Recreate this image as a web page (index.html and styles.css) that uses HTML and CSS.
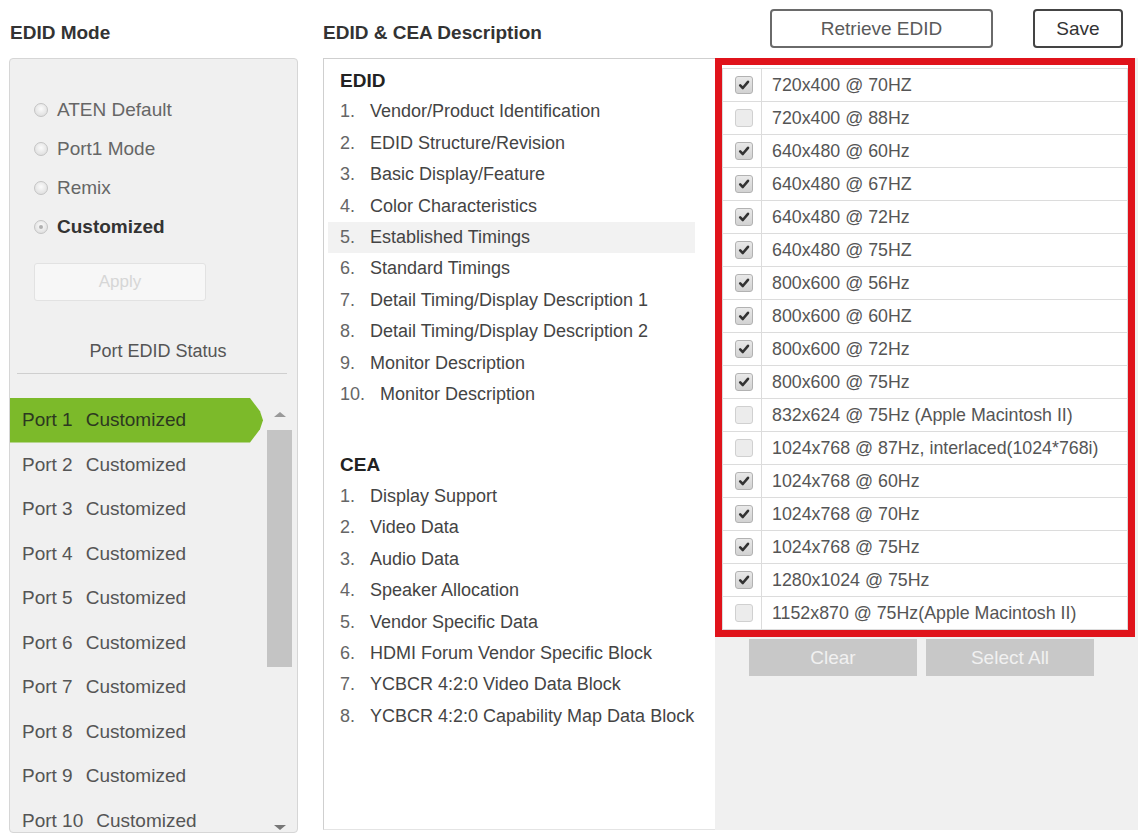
FILE: index.html
```html
<!DOCTYPE html>
<html lang="en">
<head>
<meta charset="utf-8">
<title>EDID Settings</title>
<link rel="stylesheet" href="styles.css">
</head>
<body>
<div class="page">
  <section class="col col-left">
    <div class="col-head"><h2 class="title">EDID Mode</h2></div>
    <div class="mode-panel">
      <div class="radios">
        <div class="radio-row"><span class="radio"></span>ATEN Default</div>
        <div class="radio-row"><span class="radio"></span>Port1 Mode</div>
        <div class="radio-row"><span class="radio"></span>Remix</div>
        <div class="radio-row selected"><span class="radio on"></span>Customized</div>
      </div>
      <button class="apply" type="button">Apply</button>
      <div class="status-title">Port EDID Status</div>
      <div class="port-area">
        <ul class="port-list">
          <li class="port active"><span class="port-name">Port 1</span><span>Customized</span></li>
          <li class="port"><span class="port-name">Port 2</span><span>Customized</span></li>
          <li class="port"><span class="port-name">Port 3</span><span>Customized</span></li>
          <li class="port"><span class="port-name">Port 4</span><span>Customized</span></li>
          <li class="port"><span class="port-name">Port 5</span><span>Customized</span></li>
          <li class="port"><span class="port-name">Port 6</span><span>Customized</span></li>
          <li class="port"><span class="port-name">Port 7</span><span>Customized</span></li>
          <li class="port"><span class="port-name">Port 8</span><span>Customized</span></li>
          <li class="port"><span class="port-name">Port 9</span><span>Customized</span></li>
          <li class="port"><span class="port-name">Port 10</span><span>Customized</span></li>
        </ul>
        <div class="scrollbar">
          <span class="arrow up"></span>
          <span class="thumb"></span>
          <span class="arrow down"></span>
        </div>
      </div>
    </div>
  </section>

  <section class="col col-mid">
    <div class="col-head"><h2 class="title">EDID &amp; CEA Description</h2></div>
    <div class="desc-panel">
      <div class="desc-head">EDID</div>
      <ul class="desc-list">
        <li><span class="num">1.</span>Vendor/Product Identification</li>
        <li><span class="num">2.</span>EDID Structure/Revision</li>
        <li><span class="num">3.</span>Basic Display/Feature</li>
        <li><span class="num">4.</span>Color Characteristics</li>
        <li class="current"><span class="num">5.</span>Established Timings</li>
        <li><span class="num">6.</span>Standard Timings</li>
        <li><span class="num">7.</span>Detail Timing/Display Description 1</li>
        <li><span class="num">8.</span>Detail Timing/Display Description 2</li>
        <li><span class="num">9.</span>Monitor Description</li>
        <li><span class="num wide">10.</span>Monitor Description</li>
      </ul>
      <div class="desc-head cea">CEA</div>
      <ul class="desc-list">
        <li><span class="num">1.</span>Display Support</li>
        <li><span class="num">2.</span>Video Data</li>
        <li><span class="num">3.</span>Audio Data</li>
        <li><span class="num">4.</span>Speaker Allocation</li>
        <li><span class="num">5.</span>Vendor Specific Data</li>
        <li><span class="num">6.</span>HDMI Forum Vendor Specific Block</li>
        <li><span class="num">7.</span>YCBCR 4:2:0 Video Data Block</li>
        <li><span class="num">8.</span>YCBCR 4:2:0 Capability Map Data Block</li>
      </ul>
    </div>
  </section>

  <section class="col col-right">
    <div class="col-head right-head">
      <button class="btn-outline retrieve" type="button">Retrieve EDID</button>
      <button class="btn-outline save" type="button">Save</button>
    </div>
    <div class="timing-panel">
      <div class="timings">
        <ul class="timing-list">
          <li><span class="cb-cell"><span class="cb on"><svg viewBox="0 0 12 12" width="12" height="12"><path d="M2.2 6.4 L4.8 9 L10 2.8" /></svg></span></span><span class="t-text">720x400 @ 70HZ</span></li>
          <li><span class="cb-cell"><span class="cb"></span></span><span class="t-text">720x400 @ 88Hz</span></li>
          <li><span class="cb-cell"><span class="cb on"><svg viewBox="0 0 12 12" width="12" height="12"><path d="M2.2 6.4 L4.8 9 L10 2.8" /></svg></span></span><span class="t-text">640x480 @ 60Hz</span></li>
          <li><span class="cb-cell"><span class="cb on"><svg viewBox="0 0 12 12" width="12" height="12"><path d="M2.2 6.4 L4.8 9 L10 2.8" /></svg></span></span><span class="t-text">640x480 @ 67HZ</span></li>
          <li><span class="cb-cell"><span class="cb on"><svg viewBox="0 0 12 12" width="12" height="12"><path d="M2.2 6.4 L4.8 9 L10 2.8" /></svg></span></span><span class="t-text">640x480 @ 72Hz</span></li>
          <li><span class="cb-cell"><span class="cb on"><svg viewBox="0 0 12 12" width="12" height="12"><path d="M2.2 6.4 L4.8 9 L10 2.8" /></svg></span></span><span class="t-text">640x480 @ 75HZ</span></li>
          <li><span class="cb-cell"><span class="cb on"><svg viewBox="0 0 12 12" width="12" height="12"><path d="M2.2 6.4 L4.8 9 L10 2.8" /></svg></span></span><span class="t-text">800x600 @ 56Hz</span></li>
          <li><span class="cb-cell"><span class="cb on"><svg viewBox="0 0 12 12" width="12" height="12"><path d="M2.2 6.4 L4.8 9 L10 2.8" /></svg></span></span><span class="t-text">800x600 @ 60HZ</span></li>
          <li><span class="cb-cell"><span class="cb on"><svg viewBox="0 0 12 12" width="12" height="12"><path d="M2.2 6.4 L4.8 9 L10 2.8" /></svg></span></span><span class="t-text">800x600 @ 72Hz</span></li>
          <li><span class="cb-cell"><span class="cb on"><svg viewBox="0 0 12 12" width="12" height="12"><path d="M2.2 6.4 L4.8 9 L10 2.8" /></svg></span></span><span class="t-text">800x600 @ 75Hz</span></li>
          <li><span class="cb-cell"><span class="cb"></span></span><span class="t-text">832x624 @ 75Hz (Apple Macintosh II)</span></li>
          <li><span class="cb-cell"><span class="cb"></span></span><span class="t-text">1024x768 @ 87Hz, interlaced(1024*768i)</span></li>
          <li><span class="cb-cell"><span class="cb on"><svg viewBox="0 0 12 12" width="12" height="12"><path d="M2.2 6.4 L4.8 9 L10 2.8" /></svg></span></span><span class="t-text">1024x768 @ 60Hz</span></li>
          <li><span class="cb-cell"><span class="cb on"><svg viewBox="0 0 12 12" width="12" height="12"><path d="M2.2 6.4 L4.8 9 L10 2.8" /></svg></span></span><span class="t-text">1024x768 @ 70Hz</span></li>
          <li><span class="cb-cell"><span class="cb on"><svg viewBox="0 0 12 12" width="12" height="12"><path d="M2.2 6.4 L4.8 9 L10 2.8" /></svg></span></span><span class="t-text">1024x768 @ 75Hz</span></li>
          <li><span class="cb-cell"><span class="cb on"><svg viewBox="0 0 12 12" width="12" height="12"><path d="M2.2 6.4 L4.8 9 L10 2.8" /></svg></span></span><span class="t-text">1280x1024 @ 75Hz</span></li>
          <li><span class="cb-cell"><span class="cb"></span></span><span class="t-text">1152x870 @ 75Hz(Apple Macintosh II)</span></li>
        </ul>
      </div>
      <div class="actions">
        <button class="btn-grey" type="button">Clear</button>
        <button class="btn-grey" type="button">Select All</button>
      </div>
    </div>
  </section>
</div>
</body>
</html>
```

FILE: styles.css
```css
html, body {
  margin: 0;
  padding: 0;
  overflow: hidden;
  background: #ffffff;
}

body {
  font-family: "Liberation Sans", Arial, sans-serif;
  color: #444;
}

.page {
  display: flex;
  width: 1140px;
  height: 835px;
  padding-left: 9px;
  box-sizing: border-box;
}

.col-left { width: 289px; }
.col-mid { width: 392px; margin-left: 25px; }
.col-right { width: 423px; }

.col-head {
  height: 58px;
  padding-top: 8px;
  box-sizing: border-box;
  display: flex;
  align-items: center;
}

.title {
  margin: 0;
  font-size: 19px;
  font-weight: bold;
  color: #333;
}

.col-left .title { padding-left: 1px; }

/* ---------- left: mode panel ---------- */
.mode-panel {
  height: 775px;
  box-sizing: border-box;
  background: #f0f0f0;
  border: 1px solid #d6d6d6;
  border-radius: 4px;
  padding-top: 31px;
  overflow: hidden;
}

.radios { padding-left: 24px; }

.radio-row {
  display: flex;
  align-items: center;
  height: 39px;
  font-size: 19px;
  color: #666;
}

.radio-row.selected {
  font-weight: bold;
  color: #333;
}

.radio {
  position: relative;
  width: 14px;
  height: 14px;
  box-sizing: border-box;
  border-radius: 50%;
  border: 1px solid #c4c4c4;
  background: radial-gradient(circle at 50% 40%, #fbfbfb, #d8d8d8);
  margin-right: 9px;
  flex: none;
}

.radio.on::after {
  content: "";
  position: absolute;
  left: 4px;
  top: 4px;
  width: 4px;
  height: 4px;
  border-radius: 50%;
  background: #b0b0b0;
}

.apply {
  display: block;
  margin: 17px 0 0 24px;
  width: 172px;
  height: 38px;
  background: #f7f7f7;
  border: 1px solid #e2e2e2;
  border-radius: 3px;
  color: #d6d6d6;
  font-family: inherit;
  font-size: 17px;
}

.status-title {
  margin: 32px 10px 0 7px;
  padding: 0 0 4px 12px;
  line-height: 36px;
  border-bottom: 1px solid #cfcfcf;
  text-align: center;
  font-size: 18px;
  color: #555;
}

.port-area {
  display: flex;
  margin-top: 24px;
}

.port-list {
  list-style: none;
  margin: 0;
  padding: 0;
  width: 257px;
}

.port {
  display: flex;
  align-items: center;
  height: 44.5px;
  padding-left: 12px;
  font-size: 19px;
  color: #555;
}

.port-name { margin-right: 13px; }

.port.active {
  margin-right: 4px;
  background: #7cba2a;
  color: #2c3820;
  clip-path: polygon(0 0, calc(100% - 13px) 0, calc(100% - 3px) 30%, 100% 50%, calc(100% - 3px) 70%, calc(100% - 13px) 100%, 0 100%);
}

.scrollbar {
  width: 25px;
  display: flex;
  flex-direction: column;
  align-items: center;
}

.arrow {
  width: 0;
  height: 0;
  border-left: 6px solid transparent;
  border-right: 6px solid transparent;
}

.arrow.up {
  margin-top: 14px;
  border-bottom: 5px solid #999;
}

.thumb {
  width: 25px;
  height: 237px;
  margin-top: 13px;
  background: #c4c4c4;
}

.arrow.down {
  margin-top: 158px;
  border-top: 5px solid #777;
}

/* ---------- middle: description ---------- */
.desc-panel {
  height: 772px;
  box-sizing: border-box;
  background: #fff;
  border-top: 1px solid #cfcfcf;
  border-left: 1px solid #cfcfcf;
  border-bottom: 1px solid #e4e4e4;
  padding: 6px 20px 0 4px;
}

.desc-head {
  padding-left: 12px;
  line-height: 31.4px;
  font-size: 19px;
  font-weight: bold;
  color: #222;
}

.desc-head.cea { margin-top: 39px; }

.desc-list {
  list-style: none;
  margin: 0;
  padding: 0;
}

.desc-list li {
  display: flex;
  padding-left: 12px;
  line-height: 31.4px;
  font-size: 18px;
  color: #444;
}

.desc-list li.current { background: #f2f2f2; }

.num {
  width: 30px;
  flex: none;
  color: #666;
}

.num.wide { width: 40px; }

/* ---------- right: timings ---------- */
.right-head {
  justify-content: flex-end;
  align-items: flex-start;
  padding-top: 9px;
  padding-right: 15px;
  gap: 40px;
}

.btn-outline {
  height: 39px;
  background: #fff;
  border-radius: 4px;
  font-family: inherit;
  font-size: 19px;
}

.btn-outline.retrieve {
  width: 223px;
  border: 2px solid #6a6a6a;
  color: #5a5a5a;
}

.btn-outline.save {
  width: 90px;
  border: 2px solid #444;
  color: #333;
}

.timing-panel {
  height: 772px;
  box-sizing: border-box;
  background: #f0f0f0;
}

.timings {
  margin-right: 3px;
  border: 7px solid #e0131b;
  padding-top: 3px;
  background: #fff;
}

.timing-list {
  list-style: none;
  margin: 0;
  padding: 0;
  border: 1px solid #dcdcdc;
}

.timing-list li {
  display: flex;
  align-items: stretch;
  height: 33px;
  box-sizing: border-box;
  border-bottom: 1px solid #dcdcdc;
}

.timing-list li:last-child { border-bottom: none; height: 32px; }

.cb-cell {
  width: 39px;
  flex: none;
  box-sizing: border-box;
  border-right: 1px solid #dcdcdc;
  display: flex;
  align-items: center;
  padding-left: 12px;
}

.cb {
  width: 18px;
  height: 18px;
  box-sizing: border-box;
  border: 1px solid #d0d0d0;
  border-radius: 3px;
  background: #ececec;
  display: flex;
  align-items: center;
  justify-content: center;
}

.cb.on {
  border-color: #b2b2b2;
  background: linear-gradient(#e9e9e9, #d2d2d2);
}

.cb svg path {
  fill: none;
  stroke: #333;
  stroke-width: 2.6;
  stroke-linecap: round;
  stroke-linejoin: round;
}

.t-text {
  display: flex;
  align-items: center;
  padding-left: 10px;
  font-size: 17.8px;
  color: #555;
  white-space: nowrap;
}

.actions {
  display: flex;
  gap: 9px;
  padding-left: 34px;
  margin-top: 2px;
}

.btn-grey {
  width: 168px;
  height: 37px;
  border: none;
  background: #c8c8c8;
  color: #f1f1f1;
  font-family: inherit;
  font-size: 19px;
}
```
